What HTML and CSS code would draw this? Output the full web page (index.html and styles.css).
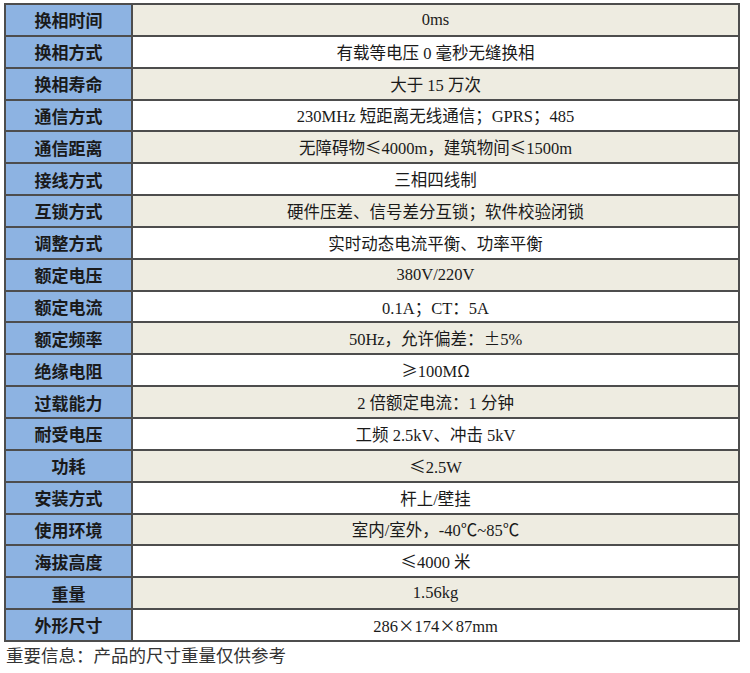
FILE: index.html
```html
<!DOCTYPE html>
<html lang="zh">
<head>
<meta charset="utf-8">
<link rel="stylesheet" href="styles.css">
</head>
<body>
<div class="page">
<table class="spec">
<tbody>
<tr><th>换相时间</th><td>0ms</td></tr>
<tr><th>换相方式</th><td>有载等电压 0 毫秒无缝换相</td></tr>
<tr><th>换相寿命</th><td>大于 15 万次</td></tr>
<tr><th>通信方式</th><td>230MHz 短距离无线通信；GPRS；485</td></tr>
<tr><th>通信距离</th><td>无障碍物<span class="w">≤</span>4000m，建筑物间<span class="w">≤</span>1500m</td></tr>
<tr><th>接线方式</th><td>三相四线制</td></tr>
<tr><th>互锁方式</th><td>硬件压差、信号差分互锁；软件校验闭锁</td></tr>
<tr><th>调整方式</th><td>实时动态电流平衡、功率平衡</td></tr>
<tr><th>额定电压</th><td>380V/220V</td></tr>
<tr><th>额定电流</th><td>0.1A；CT：5A</td></tr>
<tr><th>额定频率</th><td>50Hz，允许偏差：<span class="w">±</span>5%</td></tr>
<tr><th>绝缘电阻</th><td><span class="w">≥</span>100M<span class="w">Ω</span></td></tr>
<tr><th>过载能力</th><td>2 倍额定电流：1 分钟</td></tr>
<tr><th>耐受电压</th><td>工频 2.5kV、冲击 5kV</td></tr>
<tr><th>功耗</th><td><span class="w">≤</span>2.5W</td></tr>
<tr><th>安装方式</th><td>杆上/壁挂</td></tr>
<tr><th>使用环境</th><td>室内/室外，-40<span class="w">℃</span>~85<span class="w">℃</span></td></tr>
<tr><th>海拔高度</th><td><span class="w">≤</span>4000 米</td></tr>
<tr><th>重量</th><td>1.56kg</td></tr>
<tr><th>外形尺寸</th><td>286<span class="w">×</span>174<span class="w">×</span>87mm</td></tr>
</tbody>
</table>
<p class="note">重要信息：产品的尺寸重量仅供参考</p>
</div>
</body>
</html>
```

FILE: styles.css
```css
html, body {
  margin: 0;
  padding: 0;
  background: #ffffff;
}

.page {
  padding: 3px 0 0 4px;
  width: 736px;
}

.spec {
  width: 736px;
  border-collapse: collapse;
  border: 2px solid #4d4d4d;
  table-layout: fixed;
}

.spec th,
.spec td {
  border: 2px solid #4d4d4d;
  height: 29.85px;
  padding: 0;
  text-align: center;
  vertical-align: middle;
  color: #1a1a1a;
}

.spec th {
  width: 125px;
  background: #8db3e2;
  font-family: "Noto Sans CJK SC", sans-serif;
  font-weight: 700;
  font-size: 17px;
}

.spec td {
  font-family: "Liberation Serif", "Noto Sans CJK SC", serif;
  font-weight: 400;
  font-size: 16.5px;
  background: #ffffff;
}

.spec .w {
  font-family: "Noto Sans CJK SC", sans-serif;
}

.spec tr:nth-child(odd) td {
  background: #eeece1;
}

.note {
  margin: 3px 0 0 2px;
  font-family: "Liberation Serif", "Noto Sans CJK SC", serif;
  font-size: 17.5px;
  line-height: 22px;
  color: #333333;
}
```
